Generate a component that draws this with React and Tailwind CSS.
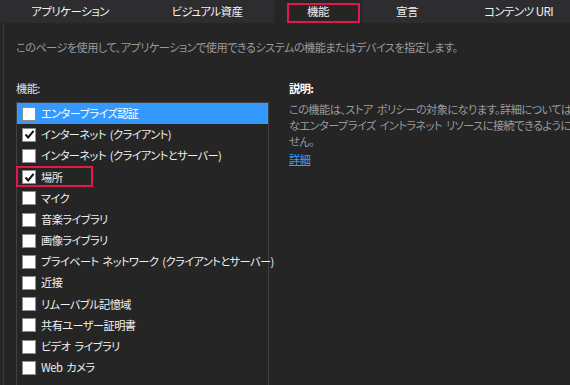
const tabs = [
  { label: "アプリケーション", w: "w-[140px]" },
  { label: "ビジュアル資産", w: "w-[134px]" },
  { label: "機能", w: "w-[88px]", active: true },
  { label: "宣言", w: "w-[90px]" },
  { label: "コンテンツ URI", w: "w-[133px]" },
];

const capabilities = [
  { label: "エンタープライズ認証", selected: true },
  { label: "インターネット (クライアント)", checked: true },
  { label: "インターネット (クライアントとサーバー)" },
  { label: "場所", checked: true, marked: true },
  { label: "マイク" },
  { label: "音楽ライブラリ" },
  { label: "画像ライブラリ" },
  { label: "プライベート ネットワーク (クライアントとサーバー)" },
  { label: "近接" },
  { label: "リムーバブル記憶域" },
  { label: "共有ユーザー証明書" },
  { label: "ビデオ ライブラリ" },
  { label: "Web カメラ" },
];

function CheckBox({ checked }) {
  return (
    <span className="w-[14px] h-[14px] shrink-0 bg-white border border-[#8c8c8c] flex items-center justify-center">
      {checked && (
        <svg width="11" height="11" viewBox="0 0 11 11">
          <path d="M1.5 5.5 L4.2 8.4 L9.6 1.8" fill="none" stroke="#111" strokeWidth="2" />
        </svg>
      )}
    </span>
  );
}

export default function App() {
  return (
    <div
      className="w-[570px] h-[385px] overflow-hidden bg-[#252526] text-[11.2px] tracking-[-0.55px] text-[#f1f1f1] [font-feature-settings:'palt'] flex flex-col"
      style={{ fontFamily: '"Noto Sans CJK JP", "Noto Sans", sans-serif' }}
    >
      {/* tab bar */}
      <div className="h-[23px] shrink-0 bg-[#2d2d30] flex">
        {tabs.map((t) => (
          <div
            key={t.label}
            className={`${t.w} shrink-0 relative flex items-center justify-center leading-none text-[11.5px] ${t.active ? "bg-[#252526]" : ""}`}
          >
            {t.label}
            {t.active && (
              <span className="absolute left-[13px] top-[3px] w-[73px] h-[20px] border-2 border-[#e3174a]" />
            )}
          </div>
        ))}
      </div>

      <div className="flex-1 ml-[3px] border-l border-[#3a3a3e] pl-[12px] flex flex-col">
        <p className="mt-[16px] leading-[16px] text-[#9a9a9a] whitespace-nowrap">
          このページを使用して、アプリケーションで使用できるシステムの機能またはデバイスを指定します。
        </p>

        <div className="mt-[25px] flex flex-1">
          {/* capabilities list */}
          <div className="w-[253px] shrink-0 flex flex-col">
            <div className="h-[16px] leading-[16px] text-[#e0e0e0] mb-[6px]">機能:</div>
            <div className="flex-1 border border-[#3f3f46] border-b-0">
              {capabilities.map((c) => (
                <div
                  key={c.label}
                  className={`relative h-[21.2px] flex items-center pl-[5px] gap-[5px] whitespace-nowrap ${c.selected ? "bg-[#3399ff] text-white" : ""}`}
                >
                  <CheckBox checked={c.checked} />
                  <span className="leading-none [word-spacing:2px]">{c.label}</span>
                  {c.marked && (
                    <span className="absolute left-[-1px] top-[-1px] w-[77px] h-[21px] border-2 border-[#e3174a]" />
                  )}
                </div>
              ))}
            </div>
          </div>

          {/* description */}
          <div className="ml-[20px] flex-1 min-w-0 overflow-hidden">
            <div className="h-[16px] leading-[16px] font-bold text-white mb-[5px]">説明:</div>
            <div className="leading-[16px] text-[#9a9a9a] whitespace-nowrap [word-spacing:2px]">
              <div>この機能は、ストア ポリシーの対象になります。詳細については、</div>
              <div>なエンタープライズ イントラネット リソースに接続できるようにし</div>
              <div>せん。</div>
            </div>
            <a href="#" className="block mt-[2px] leading-[16px] text-[#3a9dff] underline">
              詳細
            </a>
          </div>
        </div>
      </div>
    </div>
  );
}
